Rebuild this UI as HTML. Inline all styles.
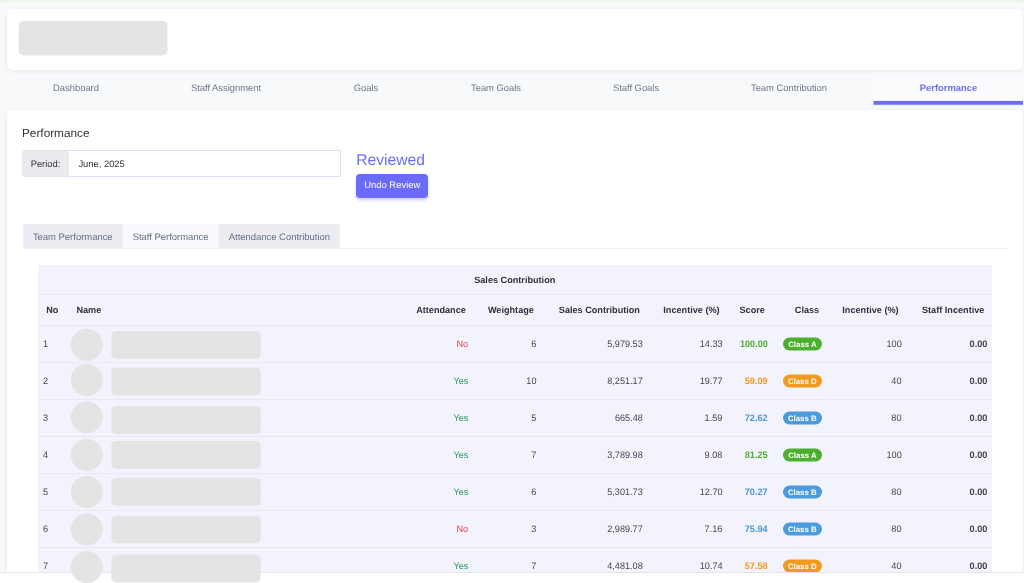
<!DOCTYPE html>
<html lang="en">
<head>
<meta charset="utf-8">
<title>Performance</title>
<style>
*{box-sizing:border-box;margin:0;padding:0}
html,body{width:1024px;height:583px;overflow:hidden}
body{background:#f8f9fb;font-family:"Liberation Sans",Arial,sans-serif;color:#333;position:relative;font-size:9.4px}
#wrap{position:absolute;left:0;top:0;width:1024px;height:583px;overflow:hidden;will-change:transform;text-rendering:geometricPrecision}
.topline{position:absolute;left:0;top:0;width:1024px;height:2px;background:#eff4e9}
.card{position:absolute;background:#fff;border-radius:5px;box-shadow:0 1px 4px rgba(60,70,100,.10)}
#hdr{left:7px;top:9px;width:1016px;height:61px}
.ph{position:absolute;background:#e4e4e4}
#logo{left:19px;top:21px;width:149px;height:35px;border-radius:5px}
#nav{position:absolute;left:7px;top:70px;width:1017px;height:34px;display:flex}
#nav div{height:35px;line-height:36px;text-align:center;color:#6b7785;font-size:9.4px}
#nav div.act{color:#6a6df5;font-weight:bold}
#actbg{position:absolute;left:873px;top:79px;width:151px;height:27px}
#main{left:7px;top:110px;width:1016px;height:500px;border-radius:5px}
h1{position:absolute;left:22px;top:126px;font-size:11.8px;font-weight:normal;color:#333;line-height:14px;transform:translateY(-.45px)}
#period{position:absolute;left:22px;top:150px;width:318.5px;height:27px}
#period .lab{position:absolute;left:0;top:0;width:47px;height:27px;background:#e9ebee;line-height:27px;text-align:center;color:#333;border:1px solid #e3e5e9;border-right:none;border-radius:4px 0 0 4px;line-height:25px;text-indent:-1px}
#period .inp{position:absolute;left:46px;top:0;width:272.5px;height:27px;border:1px solid #dcdffa;background:#fff}
#period .val{position:absolute;left:56.4px;top:1px;line-height:25px;color:#333}
#rev{position:absolute;left:356.2px;top:151.5px;font-size:15.65px;color:#6b6ef9;line-height:18px}
#undo{position:absolute;left:356px;top:174px;width:72px;height:24px;border-radius:4px;background:#6a6cf9;color:#fff;font-size:9.45px;line-height:24px;text-align:center;text-indent:.5px;box-shadow:0 1.5px 3px rgba(99,102,241,.32)}
#tabs{position:absolute;left:23px;top:224px;height:25px;display:flex}
#tabs div{height:25px;line-height:27.6px;text-align:center;background:#ebedf2;color:#627086;font-size:9.45px}
#tabs div.on{background:#f8f9fc;color:#627086}
#tabline{position:absolute;left:23px;top:248px;width:985px;height:1px;background:#eef0f6}
#tbl{position:absolute;left:38px;top:265px;width:953.5px;background:#f3f3fe;font-size:9.15px}
.tr{position:relative;width:953.5px;border-bottom:1px solid #e8e8f6}
.tr.t{height:30px;font-weight:bold;color:#303034}
.tr.h{height:31px;font-weight:bold;color:#303034}
.tr.d{height:37px;color:#444;font-size:9.45px}
.tr.d .c{transform:scaleX(.966);transform-origin:right center}
.tr.d .c.l{transform-origin:left center}
.c{position:absolute;top:0;white-space:nowrap}
.tr.t .c,.tr.h .c{line-height:30px}
.tr.d .c{line-height:37px}
.g{color:#4caf2f;font-weight:bold}.o{color:#f39a1e;font-weight:bold}.b{color:#4a98d8;font-weight:bold}
.yes{color:#2e9a5b}.no{color:#e0434f}
.badge{position:absolute;top:12px;height:13px;line-height:13.4px;padding:0 5.25px;border-radius:7px;color:#fff;font-weight:bold;font-size:7.85px;white-space:nowrap;transform:translateY(-.5px)}
.bg{background:#4caf2f}.bo{background:#f39a1e}.bb{background:#4c9bdc}
.circ{z-index:3;position:absolute;left:32.6px;top:3px;width:32px;height:32px;border-radius:50%;background:#e4e4e4}
.nm{z-index:3;position:absolute;left:73px;top:5px;width:149.75px;height:28px;border-radius:4.5px;background:#e4e4e4}
#phs{position:absolute;left:0;top:0;z-index:3}
#foot{z-index:2;position:absolute;left:0;top:572px;width:1024px;height:11px;background:#fff;border-top:1px solid #e4e4f0}
</style>
</head>
<body>
<div id="wrap">
<div class="topline"></div>
<div class="card" id="hdr"></div>
<svg id="actbg" width="151" height="27" viewBox="0 0 151 27"><rect x="0.5" y="0" width="150.5" height="25.75" fill="#fafbfd"/><rect x="0.5" y="25.75" width="150.5" height="1.25" fill="#e9eaf0" opacity=".6"/><rect x="0.5" y="21.9" width="149.5" height="3.85" fill="#6b6df6"/></svg>
<div id="nav">
<div style="width:138px">Dashboard</div><div style="width:162px">Staff Assignment</div><div style="width:118px">Goals</div><div style="width:142px">Team Goals</div><div style="width:138px">Staff Goals</div><div style="width:168px">Team Contribution</div><div class="act" style="width:151px">Performance</div>
</div>
<div class="card" id="main"></div>
<h1>Performance</h1>
<div id="period"><span class="inp"></span><span class="lab">Period:</span><span class="val">June, 2025</span></div>
<div id="rev">Reviewed</div>
<div id="undo">Undo Review</div>
<div id="tabs"><div style="width:99.5px">Team Performance</div><div class="on" style="width:96.25px">Staff Performance</div><div style="width:121.25px">Attendance Contribution</div></div>
<div id="tabline"></div>
<div id="tbl">
<div class="tr t"><span class="c" style="left:0;width:953.5px;text-align:center">Sales Contribution</span></div>
<div class="tr h"><span class="c" style="left:8.2px">No</span><span class="c" style="left:38.4px">Name</span><span class="c" style="right:525.65px">Attendance</span><span class="c" style="right:457.65px">Weightage</span><span class="c" style="right:351.55px">Sales Contribution</span><span class="c" style="right:271.9px">Incentive (%)</span><span class="c" style="right:226.65px">Score</span><span class="c" style="right:172.35px">Class</span><span class="c" style="right:92.9px">Incentive (%)</span><span class="c" style="right:7.15px">Staff Incentive</span></div>
<div class="tr d"><span class="c l" style="left:5px">1</span><span class="c no" style="right:523.6px">No</span><span class="c" style="right:454.9px">6</span><span class="c" style="right:348.8px">5,979.53</span><span class="c" style="right:269.15px">14.33</span><span class="c g" style="right:223.9px">100.00</span><span class="badge bg" style="right:169.6px">Class A</span><span class="c" style="right:90.15px">100</span><span class="c" style="right:4.4px"><b>0.00</b></span></div>
<div class="tr d"><span class="c l" style="left:5px">2</span><span class="c yes" style="right:522.9px">Yes</span><span class="c" style="right:454.9px">10</span><span class="c" style="right:348.8px">8,251.17</span><span class="c" style="right:269.15px">19.77</span><span class="c o" style="right:223.9px">59.09</span><span class="badge bo" style="right:169.6px">Class D</span><span class="c" style="right:90.15px">40</span><span class="c" style="right:4.4px"><b>0.00</b></span></div>
<div class="tr d"><span class="c l" style="left:5px">3</span><span class="c yes" style="right:522.9px">Yes</span><span class="c" style="right:454.9px">5</span><span class="c" style="right:348.8px">665.48</span><span class="c" style="right:269.15px">1.59</span><span class="c b" style="right:223.9px">72.62</span><span class="badge bb" style="right:169.6px">Class B</span><span class="c" style="right:90.15px">80</span><span class="c" style="right:4.4px"><b>0.00</b></span></div>
<div class="tr d"><span class="c l" style="left:5px">4</span><span class="c yes" style="right:522.9px">Yes</span><span class="c" style="right:454.9px">7</span><span class="c" style="right:348.8px">3,789.98</span><span class="c" style="right:269.15px">9.08</span><span class="c g" style="right:223.9px">81.25</span><span class="badge bg" style="right:169.6px">Class A</span><span class="c" style="right:90.15px">100</span><span class="c" style="right:4.4px"><b>0.00</b></span></div>
<div class="tr d"><span class="c l" style="left:5px">5</span><span class="c yes" style="right:522.9px">Yes</span><span class="c" style="right:454.9px">6</span><span class="c" style="right:348.8px">5,301.73</span><span class="c" style="right:269.15px">12.70</span><span class="c b" style="right:223.9px">70.27</span><span class="badge bb" style="right:169.6px">Class B</span><span class="c" style="right:90.15px">80</span><span class="c" style="right:4.4px"><b>0.00</b></span></div>
<div class="tr d"><span class="c l" style="left:5px">6</span><span class="c no" style="right:523.6px">No</span><span class="c" style="right:454.9px">3</span><span class="c" style="right:348.8px">2,989.77</span><span class="c" style="right:269.15px">7.16</span><span class="c b" style="right:223.9px">75.94</span><span class="badge bb" style="right:169.6px">Class B</span><span class="c" style="right:90.15px">80</span><span class="c" style="right:4.4px"><b>0.00</b></span></div>
<div class="tr d"><span class="c l" style="left:5px">7</span><span class="c yes" style="right:522.9px">Yes</span><span class="c" style="right:454.9px">7</span><span class="c" style="right:348.8px">4,481.08</span><span class="c" style="right:269.15px">10.74</span><span class="c o" style="right:223.9px">57.58</span><span class="badge bo" style="right:169.6px">Class D</span><span class="c" style="right:90.15px">40</span><span class="c" style="right:4.4px"><b>0.00</b></span></div>
</div>
<svg id="phs" width="1024" height="583" viewBox="0 0 1024 583"><rect x="18.75" y="21" width="148.75" height="34.5" rx="5" fill="#e4e4e4"/><circle cx="86.8" cy="344.80" r="16.05" fill="#e4e4e4"/><rect x="111.3" y="331.00" width="149.45" height="27.75" rx="4.5" fill="#e4e4e4"/><circle cx="86.8" cy="379.90" r="16.05" fill="#e4e4e4"/><rect x="111.3" y="367.55" width="149.45" height="27.75" rx="4.5" fill="#e4e4e4"/><circle cx="86.8" cy="417.25" r="16.05" fill="#e4e4e4"/><rect x="111.3" y="406.00" width="149.45" height="27.90" rx="4.5" fill="#e4e4e4"/><circle cx="86.8" cy="454.85" r="16.05" fill="#e4e4e4"/><rect x="111.3" y="440.90" width="149.45" height="27.85" rx="4.5" fill="#e4e4e4"/><circle cx="86.8" cy="491.95" r="16.05" fill="#e4e4e4"/><rect x="111.3" y="478.00" width="149.45" height="27.80" rx="4.5" fill="#e4e4e4"/><circle cx="86.8" cy="529.35" r="16.05" fill="#e4e4e4"/><rect x="111.3" y="515.80" width="149.45" height="27.45" rx="4.5" fill="#e4e4e4"/><circle cx="86.8" cy="567.15" r="16.05" fill="#e4e4e4"/><rect x="111.3" y="554.50" width="149.45" height="27.90" rx="4.5" fill="#e4e4e4"/></svg>
<div id="foot"></div>
</div>
</body>
</html>
